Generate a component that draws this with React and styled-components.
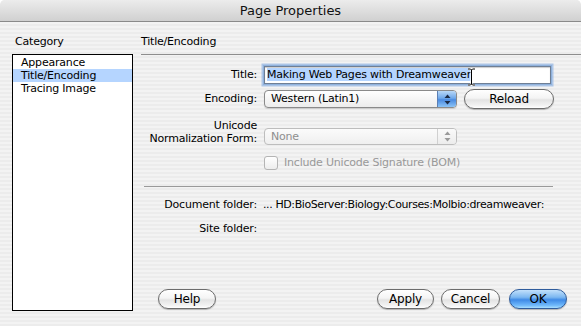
import React from 'react';
import styled, { createGlobalStyle } from 'styled-components';

const Global = createGlobalStyle`
  html, body { margin: 0; padding: 0; background: #fff; }
  body { font-family: "DejaVu Sans", "Liberation Sans", sans-serif; font-size: 11px; letter-spacing: -0.2px; color: #000; }
  #root { width: 581px; height: 326px; overflow: hidden; }
`;

const Window = styled.div`
  width: 581px;
  height: 326px;
  display: flex;
  flex-direction: column;
  background: repeating-linear-gradient(to bottom, #ececec 0, #ececec 2px, #f3f3f3 2px, #f3f3f3 4px);
  border-radius: 5px 5px 0 0;
  overflow: hidden;
`;

const TitleBar = styled.div`
  height: 21px;
  flex: none;
  border-bottom: 1px solid #8a8a8a;
  background: linear-gradient(#ececec, #d0d0d0);
  display: flex;
  align-items: center;
  justify-content: center;
  font-size: 13px;
  letter-spacing: 0;
  color: #111;
`;

const Body = styled.div`
  flex: 1;
  display: flex;
  padding: 13px 0 0 12px;
  min-height: 0;
`;

const LeftCol = styled.div`
  width: 121px;
  display: flex;
  flex-direction: column;
  padding-bottom: 15px;
`;

const SectionLabel = styled.div`
  line-height: 14px;
  padding-left: ${p => p.$indent || 0}px;
  margin-bottom: 5px;
`;

const ListBox = styled.div`
  flex: 1;
  border: 1px solid #000;
  background: #fff;
  padding-top: 1px;
`;

const ListItem = styled.div`
  height: 13px;
  line-height: 13px;
  padding-left: 8px;
  background: ${p => (p.$selected ? '#b5d5ff' : 'transparent')};
`;

const RightCol = styled.div`
  flex: 1;
  margin-left: 8px;
  display: flex;
  flex-direction: column;
  padding-bottom: 17px;
`;

const PanelHeader = styled.div`
  line-height: 14px;
  padding-bottom: 5px;
  border-bottom: 1px solid #8e8e8e;
`;

const FieldRow = styled.div`
  display: grid;
  grid-template-columns: 114px 1fr;
  column-gap: 7px;
  align-items: ${p => p.$align || 'center'};
  margin-top: ${p => p.$mt || 0}px;
  padding-left: 2px;
`;

const Label = styled.div`
  text-align: right;
  line-height: ${p => p.$lh || 14}px;
  color: #000;
`;

const Value = styled.div`
  line-height: 14px;
  white-space: nowrap;
  letter-spacing: -0.4px;
  margin-left: -1px;
`;

const InputWrap = styled.div`
  position: relative;
  width: 287px;
  height: 18px;
  box-sizing: border-box;
  border: 1px solid #6f7f95;
  background: #fff;
  box-shadow: 0 0 0 1px #8fb1dc, 0 0 0 2.5px rgba(120, 165, 225, 0.55), inset 0 1px 1px rgba(0,0,0,0.2);
  padding-left: 2px;
  line-height: 16px;
  white-space: nowrap;
`;

const Selected = styled.span`
  background: #b5d5ff;
`;

const Cursor = styled.svg`
  position: absolute;
  left: 202px;
  top: 1px;
`;

const Controls = styled.div`
  display: flex;
  align-items: center;
  gap: 7px;
`;

const Popup = styled.div`
  width: 193px;
  height: ${p => p.$h || 18}px;
  box-sizing: border-box;
  border: 1px solid ${p => (p.$disabled ? '#bdbdbd' : '#8a8a8a')};
  border-radius: 4px;
  background: ${p => (p.$disabled ? 'linear-gradient(#fbfbfb, #efefef)' : 'linear-gradient(#ffffff, #ececec)')};
  display: flex;
  align-items: center;
  color: ${p => (p.$disabled ? '#8e8e8e' : '#000')};
  overflow: hidden;
  box-shadow: ${p => (p.$disabled ? 'none' : '0 1px 1px rgba(0,0,0,0.15)')};
`;

const PopupText = styled.div`
  flex: 1;
  padding-left: 6px;
  line-height: 14px;
`;

const PopupArrows = styled.div`
  width: 18px;
  align-self: stretch;
  display: flex;
  align-items: center;
  justify-content: center;
  border-left: 1px solid ${p => (p.$disabled ? '#d0d0d0' : '#5b7fb5')};
  background: ${p =>
    p.$disabled
      ? 'linear-gradient(#fafafa, #ececec)'
      : 'linear-gradient(#b9d8f7 0%, #6fa8ea 45%, #4a8ae0 55%, #8cc4f7 100%)'};
`;

const AquaButton = styled.div`
  width: ${p => p.$w}px;
  height: 20px;
  box-sizing: border-box;
  border: 1px solid ${p => (p.$default ? '#2f5c9c' : '#6c6c6c')};
  border-radius: 10px;
  display: flex;
  align-items: center;
  justify-content: center;
  font-size: 12px;
  letter-spacing: -0.2px;
  background: ${p =>
    p.$default
      ? 'linear-gradient(#c2e0fb 0%, #7db8f1 40%, #3f8ae6 55%, #6fb8fb 85%, #a9defe 100%)'
      : 'linear-gradient(#ffffff 0%, #f4f4f4 45%, #e3e3e3 55%, #f2f2f2 85%, #ffffff 100%)'};
  box-shadow: 0 1px 1px rgba(0, 0, 0, 0.25);
`;

const CheckRow = styled.div`
  display: flex;
  align-items: center;
  gap: 6px;
  color: #999;
  line-height: 14px;
`;

const CheckBox = styled.div`
  width: 14px;
  height: 14px;
  box-sizing: border-box;
  border: 1px solid #b4b4b4;
  border-radius: 3px;
  background: linear-gradient(#ffffff, #ededed);
`;

const Separator = styled.div`
  height: 1px;
  background: #9a9a9a;
  margin: 16px 28px 0 3px;
`;

const ButtonBar = styled.div`
  margin-top: auto;
  display: flex;
  align-items: center;
  padding: 0 14px 0 17px;
`;

const Spacer = styled.div`
  flex: 1;
`;

const ButtonGroup = styled.div`
  display: flex;
  gap: 7px;
  & > :last-child { margin-left: 2px; }
`;

const Arrows = ({ color }) => (
  <svg width="7" height="11" viewBox="0 0 7 11">
    <path d="M3.5 0.5 L6.5 4 L0.5 4 Z" fill={color} />
    <path d="M3.5 10.5 L6.5 7 L0.5 7 Z" fill={color} />
  </svg>
);

export default function App() {
  return (
    <>
      <Global />
      <Window>
        <TitleBar>Page Properties</TitleBar>
        <Body>
          <LeftCol>
            <SectionLabel $indent={3}>Category</SectionLabel>
            <ListBox>
              <ListItem>Appearance</ListItem>
              <ListItem $selected>Title/Encoding</ListItem>
              <ListItem>Tracing Image</ListItem>
            </ListBox>
          </LeftCol>
          <RightCol>
            <PanelHeader>Title/Encoding</PanelHeader>

            <FieldRow $mt={11}>
              <Label>Title:</Label>
              <InputWrap>
                <Selected>Making Web Pages with Dreamweaver</Selected>
                <Cursor width="9" height="18" viewBox="0 0 9 18">
                  <path d="M1 1 H3.5 L4.5 2 L5.5 1 H8 M4.5 2 V16 M1 17 H3.5 L4.5 16 L5.5 17 H8" stroke="#fff" strokeWidth="2.2" fill="none" />
                  <path d="M1 1 H3.5 L4.5 2 L5.5 1 H8 M4.5 2 V16 M1 17 H3.5 L4.5 16 L5.5 17 H8" stroke="#000" strokeWidth="1" fill="none" />
                </Cursor>
              </InputWrap>
            </FieldRow>

            <FieldRow $mt={5}>
              <Label>Encoding:</Label>
              <Controls>
                <Popup>
                  <PopupText>Western (Latin1)</PopupText>
                  <PopupArrows>
                    <Arrows color="#1b2a44" />
                  </PopupArrows>
                </Popup>
                <AquaButton $w={90}>Reload</AquaButton>
              </Controls>
            </FieldRow>

            <FieldRow $mt={10} $align="end">
              <Label $lh={13}>
                Unicode
                <br />
                Normalization Form:
              </Label>
              <Popup $disabled $h={17}>
                <PopupText>None</PopupText>
                <PopupArrows $disabled>
                  <Arrows color="#9a9a9a" />
                </PopupArrows>
              </Popup>
            </FieldRow>

            <FieldRow $mt={11}>
              <span />
              <CheckRow>
                <CheckBox />
                Include Unicode Signature (BOM)
              </CheckRow>
            </FieldRow>

            <Separator />

            <FieldRow $mt={11}>
              <Label>Document folder:</Label>
              <Value>... HD:BioServer:Biology:Courses:Molbio:dreamweaver:</Value>
            </FieldRow>

            <FieldRow $mt={10}>
              <Label>Site folder:</Label>
              <Value />
            </FieldRow>

            <ButtonBar>
              <AquaButton $w={58}>Help</AquaButton>
              <Spacer />
              <ButtonGroup>
                <AquaButton $w={57}>Apply</AquaButton>
                <AquaButton $w={59}>Cancel</AquaButton>
                <AquaButton $w={58} $default>OK</AquaButton>
              </ButtonGroup>
            </ButtonBar>
          </RightCol>
        </Body>
      </Window>
    </>
  );
}
